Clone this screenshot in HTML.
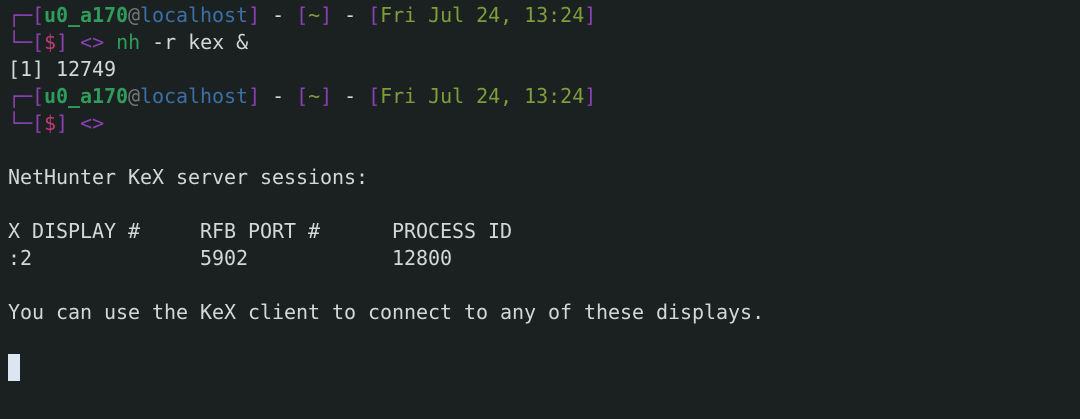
<!DOCTYPE html>
<html><head><meta charset="utf-8"><style>
html,body{margin:0;padding:0;background:#1b2121;width:1080px;height:419px;overflow:hidden}
pre{margin:0;padding:2px 0 0 8px;font-family:"DejaVu Sans Mono","Liberation Mono",monospace;font-size:20px;line-height:27px;color:#d3d7d7;letter-spacing:-0.04px}
.p{color:#8a3fb5}.g{color:#2f9c5c}.b{color:#3b6fa6}.a{color:#6f7878}.y{color:#7f9d3a}.r{color:#c23a78}
.u{font-weight:bold}
.c{display:inline-block;width:12px;height:27px;background:#dce6f2;vertical-align:top;margin-top:1px}
</style></head><body><pre><span class="p">┌─[</span><span class="g u">u0_a170</span><span class="a">@</span><span class="b">localhost</span><span class="p">]</span> - <span class="p">[</span><span class="y">~</span><span class="p">]</span> - <span class="p">[</span><span class="y">Fri Jul 24, 13:24</span><span class="p">]</span>
<span class="p">└─[</span><span class="r">$</span><span class="p">]</span> <span class="p">&lt;&gt;</span> <span class="g">nh</span> -r kex &amp;
[1] 12749
<span class="p">┌─[</span><span class="g u">u0_a170</span><span class="a">@</span><span class="b">localhost</span><span class="p">]</span> - <span class="p">[</span><span class="y">~</span><span class="p">]</span> - <span class="p">[</span><span class="y">Fri Jul 24, 13:24</span><span class="p">]</span>
<span class="p">└─[</span><span class="r">$</span><span class="p">]</span> <span class="p">&lt;&gt;</span>

NetHunter KeX server sessions:

X DISPLAY #     RFB PORT #      PROCESS ID
:2              5902            12800

You can use the KeX client to connect to any of these displays.

<span class="c"></span></pre></body></html>
